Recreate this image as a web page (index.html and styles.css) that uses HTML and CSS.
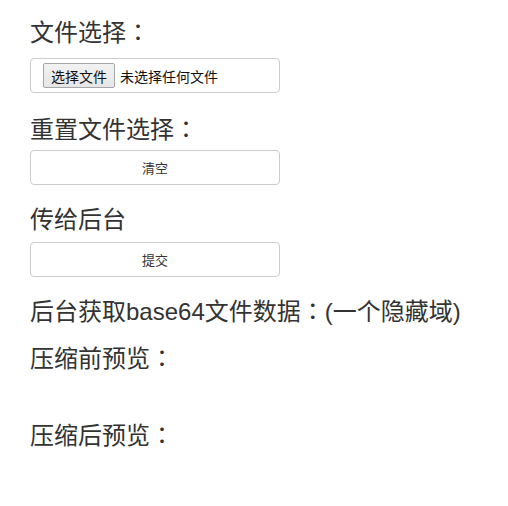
FILE: index.html
```html
<!DOCTYPE html>
<html lang="zh-CN">
<head>
<meta charset="utf-8">
<title>图片压缩上传</title>
<link rel="stylesheet" href="styles.css">
</head>
<body>
<div class="page">
  <h3 class="title first">文件选择<span class="colon">：</span></h3>
  <div class="field file-field">
    <span class="file-btn">选择文件</span>
    <span class="file-text">未选择任何文件</span>
  </div>
  <h3 class="title">重置文件选择<span class="colon">：</span></h3>
  <button class="field btn" type="button">清空</button>
  <h3 class="title send">传给后台</h3>
  <button class="field btn last" type="button">提交</button>
  <h3 class="title data">后台获取base64文件数据<span class="colon">：</span>(一个隐藏域)</h3>
  <h3 class="title before">压缩前预览<span class="colon">：</span></h3>
  <div class="preview"></div>
  <h3 class="title">压缩后预览<span class="colon">：</span></h3>
</div>
</body>
</html>
```

FILE: styles.css
```css
html, body {
  margin: 0;
  padding: 0;
  background: #fff;
}
body {
  font-family: "Liberation Sans", "Noto Sans CJK SC", sans-serif;
  color: #333;
}
.page {
  padding: 18px 0 0 30px;
  display: flex;
  flex-direction: column;
  align-items: flex-start;
}
.title {
  font-size: 24px;
  font-weight: 400;
  line-height: 26px;
  margin: 0 0 7px;
}
.colon {
  display: inline-block;
  width: 24px;
  text-align: center;
  font-family: "Noto Sans CJK TC", "Noto Sans CJK SC", sans-serif;
  font-feature-settings: "halt" 0, "chws" 0;
}
.title.first {
  margin-bottom: 12px;
}
.title.send {
  margin-bottom: 9px;
}
.title.data {
  margin-bottom: 19px;
}
.title.before {
  margin-bottom: 0;
}
.field {
  box-sizing: border-box;
  width: 250px;
  height: 35px;
  border: 1px solid #ccc;
  border-radius: 4px;
  background: #fff;
  font-family: "Liberation Sans", "Noto Sans CJK SC", sans-serif;
  font-size: 13px;
  color: #333;
  margin: 0 0 22px;
}
.field.last {
  margin-bottom: 20px;
}
.file-field {
  display: flex;
  align-items: center;
  padding: 0 12px;
  gap: 5px;
}
.file-btn {
  box-sizing: border-box;
  height: 25px;
  padding: 0 7px;
  display: flex;
  align-items: center;
  border: 1px solid #a6a6a6;
  border-radius: 2px;
  background: linear-gradient(#f2f2f2, #e6e6e6);
  color: #111;
  font-size: 14px;
}
.file-text {
  font-size: 14px;
  color: #111;
}
.btn {
  padding: 0;
  text-align: center;
  cursor: pointer;
}
.preview {
  height: 49px;
}
```
